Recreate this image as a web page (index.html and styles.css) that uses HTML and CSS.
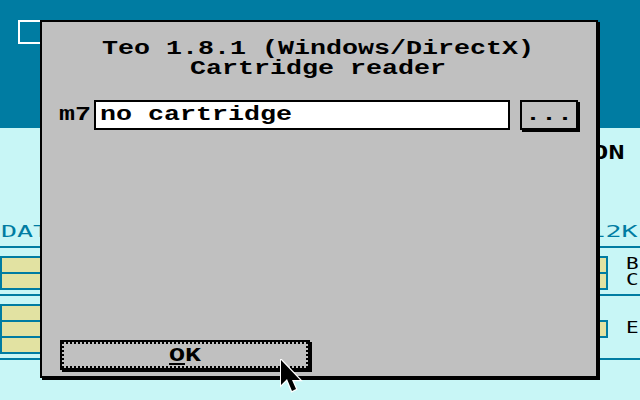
FILE: index.html
```html
<!DOCTYPE html>
<html>
<head>
<meta charset="utf-8">
<link rel="stylesheet" href="styles.css">
</head>
<body>
<div class="screen">
  <div class="band"><div class="square"></div></div>
  <div class="heading"><span class="sx sx-r">INFORMATION</span></div>
  <div class="cols">
    <span class="sx sx-l">DATA</span>
    <span class="sx sx-r">512K</span>
  </div>
  <div class="rule"></div>
  <div class="section">
    <div class="cells wide"><div class="cell"></div><div class="cell"></div></div>
    <div class="right">
      <div class="cells narrow"><div class="cell"></div><div class="cell"></div></div>
      <div class="labels"><span class="sx sx-l">B</span><span class="sx sx-l">C</span></div>
    </div>
  </div>
  <div class="rule"></div>
  <div class="section">
    <div class="cells wide"><div class="cell"></div><div class="cell"></div><div class="cell"></div></div>
    <div class="right offset">
      <div class="cells narrow"><div class="cell"></div></div>
      <div class="labels"><span class="sx sx-l">E</span></div>
    </div>
  </div>
  <div class="rule"></div>

  <div class="dialog">
    <div class="title">
      <span class="sx sx-c">Teo 1.8.1 (Windows/DirectX)</span><br>
      <span class="sx sx-c">Cartridge reader</span>
    </div>
    <div class="row">
      <span class="label"><span class="sx sx-l">m7</span></span>
      <div class="field"><span class="sx sx-l">no cartridge</span></div>
      <div class="btn small"><span class="sx sx-c">...</span></div>
    </div>
    <div class="btn ok"><div class="focus"><span class="sx sx-c"><u>O</u>K</span></div></div>
  </div>

  <svg class="pointer" width="24" height="36" viewBox="-1 -1 24 36">
    <polygon points="0,0 0,25 6,19 11,31 15,29 11,20 19,20" fill="#000" stroke="#fff" stroke-width="2.5" paint-order="stroke" stroke-linejoin="miter"/>
  </svg>
</div>
</body>
</html>
```

FILE: styles.css
```css
* {
  box-sizing: border-box;
  margin: 0;
  padding: 0;
}

body {
  margin: 0;
  background: #c8f6f6;
}

.screen {
  position: relative;
  width: 640px;
  height: 400px;
  overflow: hidden;
  background: #c8f6f6;
  font-family: "DejaVu Sans Mono", monospace;
}

/* widen glyphs to the 16px character cell of the original pixel font */
.sx {
  display: inline-block;
  white-space: pre;
  transform: scaleX(1.3333);
}

.sx-l {
  transform-origin: left center;
}

.sx-r {
  transform-origin: right center;
}

.sx-c {
  transform-origin: center center;
}

.band {
  height: 128px;
  background: #007ca2;
  padding: 20px 0 0 18px;
}

.square {
  width: 60px;
  height: 24px;
  border: 2px solid #fff;
}

.heading {
  margin-top: 14px;
  height: 20px;
  line-height: 20px;
  font-size: 20px;
  font-weight: bold;
  text-align: right;
  padding-right: 16px;
  color: #000;
}

.cols {
  margin-top: 62px;
  margin-bottom: 6px;
  display: flex;
  justify-content: space-between;
  height: 16px;
  line-height: 16px;
  font-size: 16px;
  color: #007ca2;
}

.cols .sx {
  transform: scaleX(1.6667);
}

.cols .sx-l {
  margin-left: 1px;
}

.cols .sx-r {
  margin-right: 2px;
}

.rule {
  height: 2px;
  background: #007ca2;
}

.section {
  display: flex;
  justify-content: space-between;
  align-items: flex-start;
  margin: 8px 0 4px;
}

.cells {
  display: flex;
  flex-direction: column;
  gap: 2px;
  background: #007ca2;
  border: 2px solid #007ca2;
}

.cell {
  height: 14px;
  background: #e2e2a2;
}

.wide {
  width: 120px;
}

.narrow {
  width: 60px;
}

.right {
  display: flex;
}

.right.offset {
  padding-top: 16px;
}

.labels {
  width: 32px;
  padding-left: 18px;
  display: flex;
  flex-direction: column;
  align-items: flex-start;
  font-size: 15px;
  line-height: 16px;
  color: #000;
}

.labels .sx {
  transform: scaleX(1.4);
}

.dialog {
  position: absolute;
  left: 40px;
  top: 20px;
  width: 558px;
  height: 358px;
  background: #c0c0c0;
  border: 2px solid #000;
  box-shadow: 2px 2px 0 #000;
  display: flex;
  flex-direction: column;
  padding: 17px 18px 6px 16px;
  font-family: "Liberation Mono", monospace;
  font-weight: bold;
  font-size: 20px;
  color: #000;
}

.title {
  text-align: center;
  line-height: 20px;
}

.row {
  display: flex;
  margin-top: 21px;
  height: 30px;
}

.label {
  width: 32px;
  margin-right: 4px;
  line-height: 30px;
  padding-left: 1px;
}

.field {
  flex: 1;
  margin-right: 10px;
  background: #fff;
  border: 2px solid #000;
  padding-left: 4px;
  line-height: 26px;
}

.btn {
  border: 2px solid #000;
  box-shadow: 2px 2px 0 #000;
  text-align: center;
}

.small {
  width: 58px;
  line-height: 26px;
}

.ok {
  margin-top: auto;
  margin-left: 2px;
  width: 250px;
  height: 30px;
}

.focus {
  height: 100%;
  border: 2px dotted #000;
  line-height: 22px;
  padding-top: 1px;
}

u {
  text-decoration-thickness: 2px;
  text-underline-offset: 2px;
}

.pointer {
  position: absolute;
  left: 280px;
  top: 359px;
}
```
